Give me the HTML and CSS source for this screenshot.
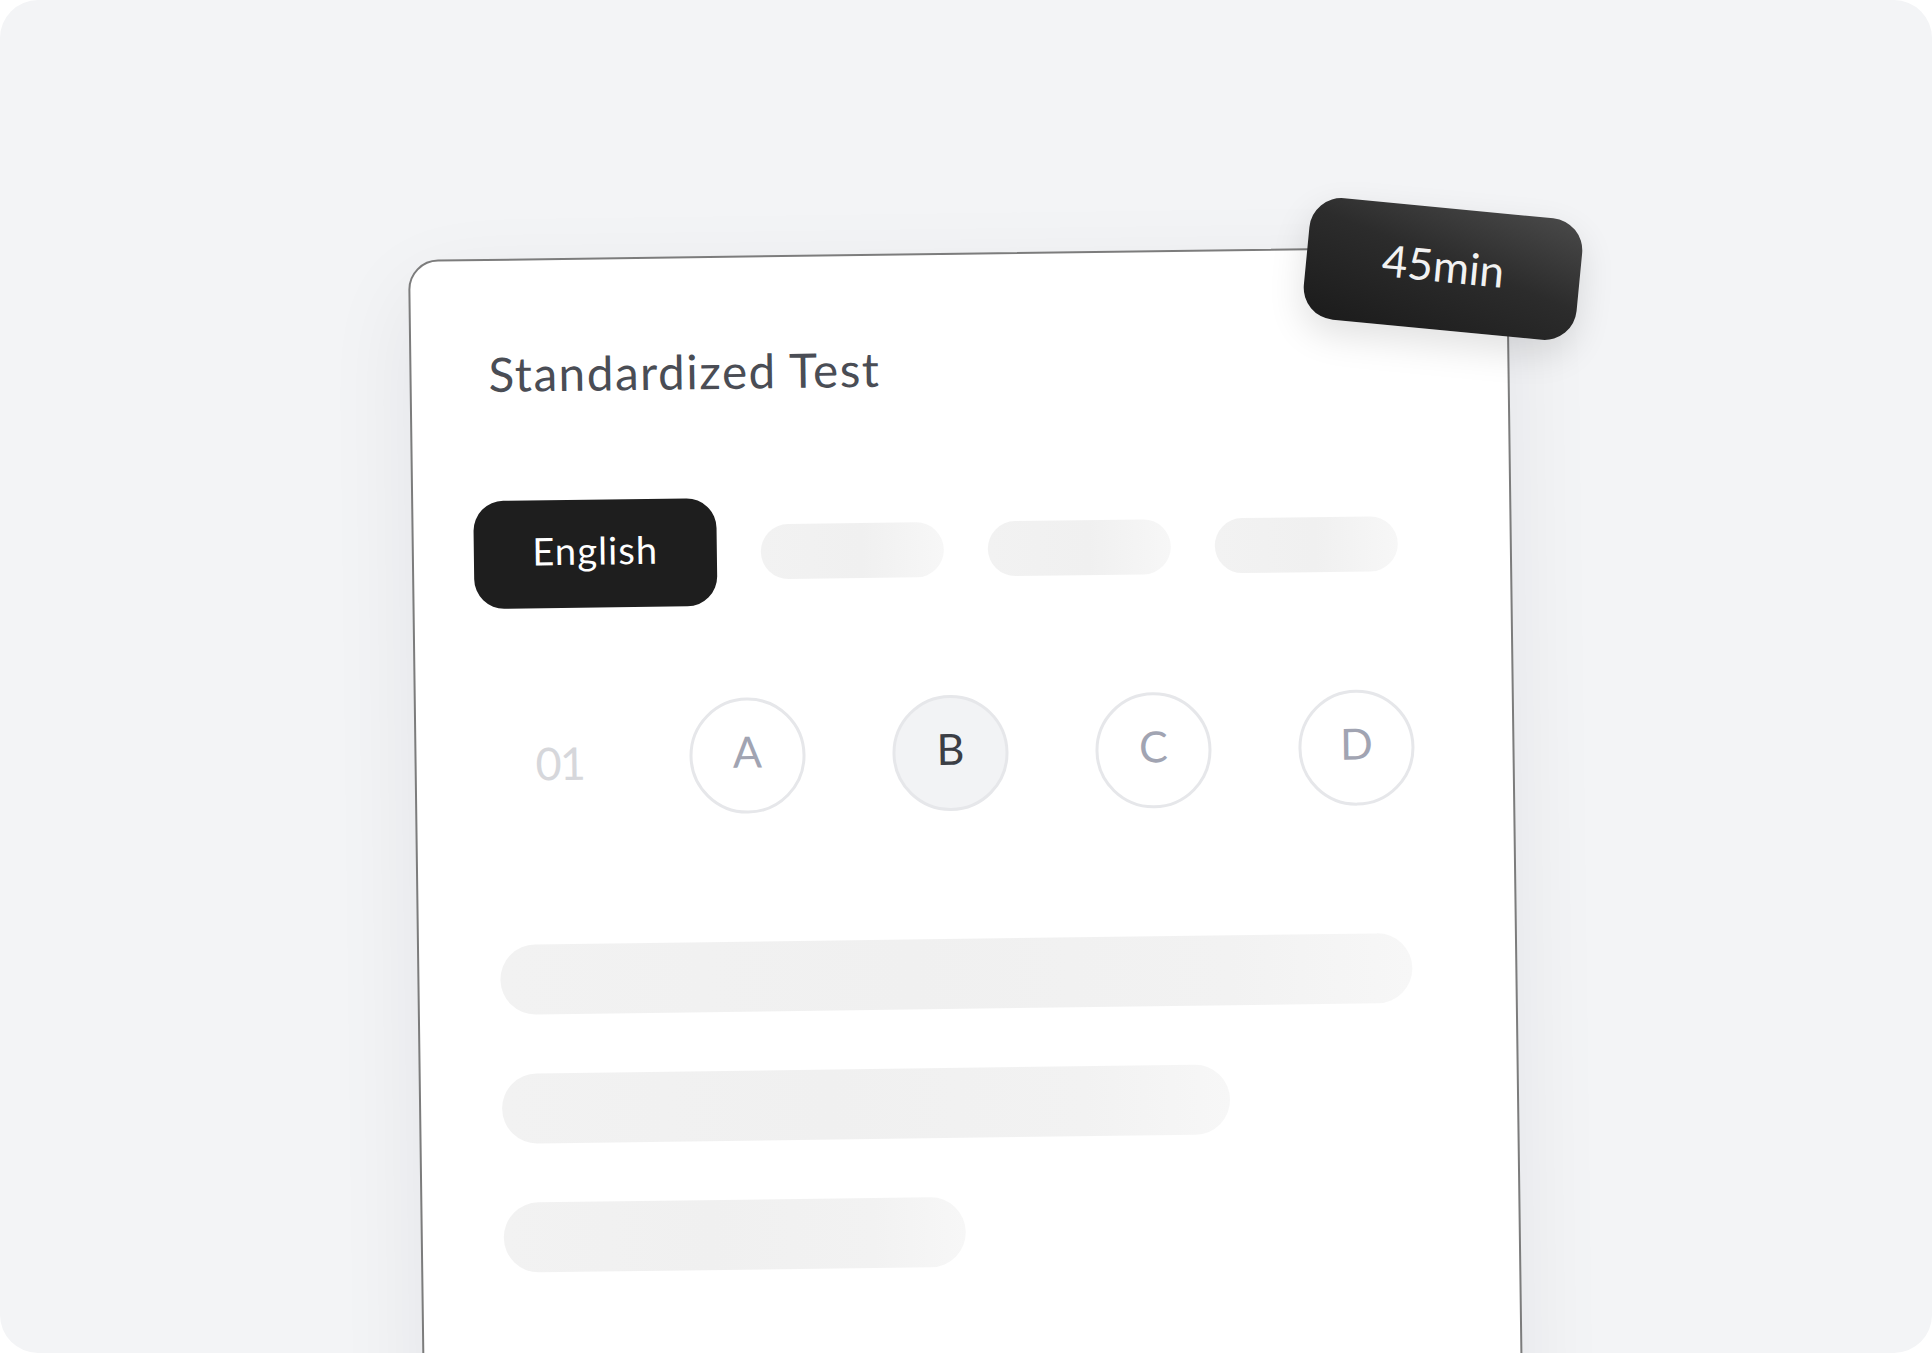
FILE: index.html
```html
<!DOCTYPE html>
<html lang="en">
<head>
<meta charset="utf-8">
<title>Standardized Test</title>
<link rel="stylesheet" href="styles.css">
</head>
<body>
<main class="stage">
  <section class="card">
    <h1 class="title">Standardized Test</h1>
    <div class="chips">
      <div class="chip chip-active">English</div>
      <div class="chip chip-skel"></div>
      <div class="chip chip-skel"></div>
      <div class="chip chip-skel"></div>
    </div>
    <div class="answers">
      <div class="num">01</div>
      <div class="opt">A</div>
      <div class="opt opt-selected">B</div>
      <div class="opt">C</div>
      <div class="opt">D</div>
    </div>
    <div class="bars">
      <div class="bar bar-long"></div>
      <div class="bar bar-mid"></div>
      <div class="bar bar-short"></div>
    </div>
  </section>
  <div class="badge">45min</div>
</main>
</body>
</html>
```

FILE: styles.css
```css
* { box-sizing: border-box; }

html, body {
  margin: 0;
  padding: 0;
  background: #ffffff;
}

body {
  font-family: "Lato", "Inter", "Noto Sans", sans-serif;
}

.stage {
  position: relative;
  width: 1932px;
  height: 1353px;
  border-radius: 38px;
  background: #f3f4f6;
  overflow: hidden;
  padding: 259.5px 0 0 408.4px;
}

.card {
  width: 1100px;
  height: 1260px;
  background: #ffffff;
  border: 2px solid #7c7c7c;
  border-radius: 30px 30px 0 0;
  transform: rotate(-0.75deg);
  transform-origin: 0 0;
  box-shadow: 0 30px 90px rgba(17, 24, 39, 0.07);
  display: flex;
  flex-direction: column;
  align-items: flex-start;
}

.title {
  margin: 89px 0 0 77px;
  font-size: 47.5px;
  line-height: 47px;
  font-weight: 400;
  color: #4a4d55;
  letter-spacing: 1.6px;
}

.chips {
  margin: 104px 0 0 60px;
  display: flex;
  align-items: center;
  gap: 44px;
}

.chip-active {
  width: 243px;
  height: 108px;
  border-radius: 30px;
  background: #1e1e1e;
  color: #ffffff;
  font-size: 38px;
  line-height: 38px;
  display: flex;
  align-items: center;
  justify-content: center;
  padding-bottom: 8px;
  letter-spacing: 1.1px;
}

.chip-skel {
  width: 183px;
  height: 55px;
  border-radius: 28px;
  background: linear-gradient(90deg, #f2f2f2 0%, #f0f0f0 55%, #f7f7f7 100%);
}

.answers {
  margin: 92px 0 0 119px;
  display: flex;
  align-items: center;
  gap: 87px;
}

.num {
  width: 67px;
  font-size: 45px;
  line-height: 45px;
  color: #d6d7db;
  margin-top: 10px;
  letter-spacing: -2px;
}

.opt {
  width: 116px;
  height: 116px;
  border-radius: 50%;
  border: 3px solid #e6e7ea;
  background: #ffffff;
  display: flex;
  align-items: center;
  justify-content: center;
  font-size: 43px;
  line-height: 43px;
  color: #a1a4b2;
  padding-bottom: 10px;
}

.opt-selected {
  background: #f2f3f5;
  color: #3b3e45;
}

.bars {
  margin: 128px 0 0 81px;
  display: flex;
  flex-direction: column;
  gap: 59px;
}

.bar {
  height: 70px;
  border-radius: 35px;
  background: linear-gradient(90deg, #f2f2f2 0%, #f0f0f0 45%, #f2f2f2 80%, #f7f7f7 100%);
}

.bar-long { width: 912px; }
.bar-mid { width: 728px; }
.bar-short { width: 462px; }

.badge {
  position: absolute;
  left: 1305.5px;
  top: 208px;
  width: 274px;
  height: 122px;
  border-radius: 32px;
  background: linear-gradient(196deg, #4a4a4a 0%, #2c2c2c 45%, #1b1b1b 100%);
  color: #f2f2f2;
  font-size: 44px;
  line-height: 44px;
  display: flex;
  align-items: center;
  justify-content: center;
  padding-bottom: 8px;
  transform: rotate(5.5deg);
  box-shadow: 0 14px 36px rgba(0, 0, 0, 0.12);
}
```
